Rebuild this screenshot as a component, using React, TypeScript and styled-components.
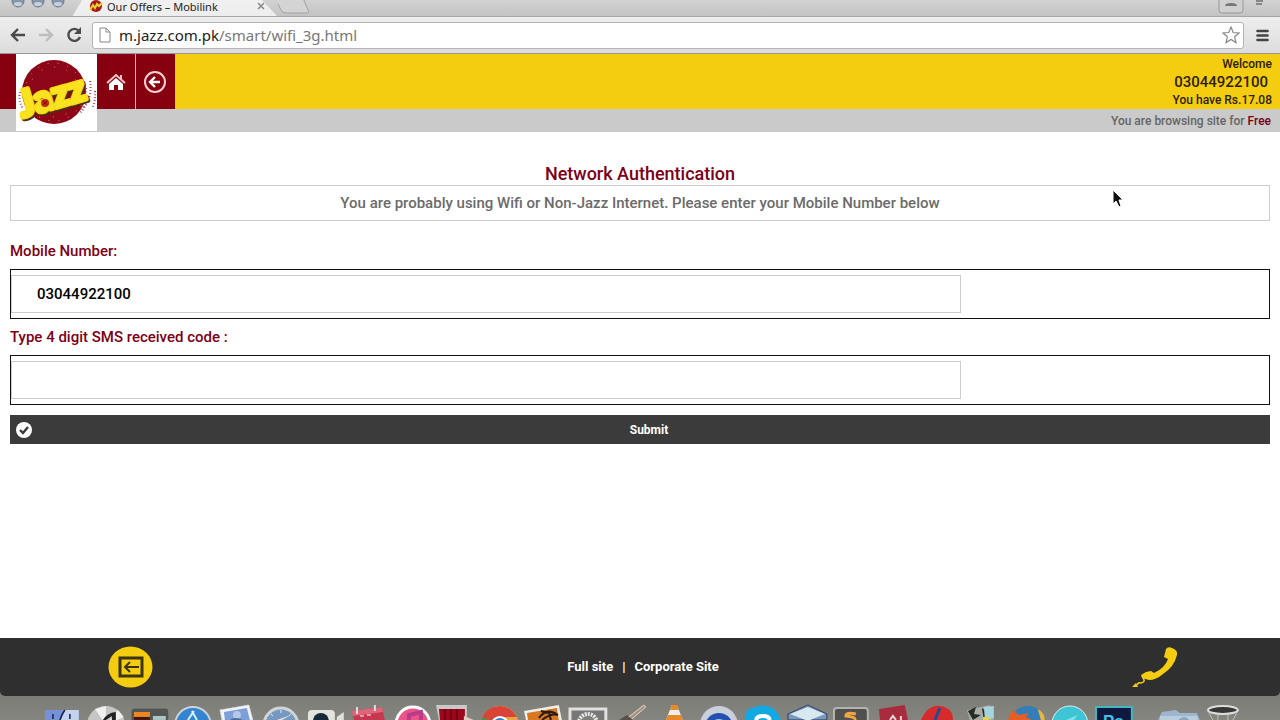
import React, { useState } from 'react';
import styled, { createGlobalStyle } from 'styled-components';

const GlobalStyle = createGlobalStyle`
  * { box-sizing: border-box; }
  body { margin: 0; background: #fff; }
  button, input { font-family: inherit; }
`;

const siteFont = '"Noto Sans", "Open Sans", sans-serif';
const maroon = '#7c0018';
const yellow = '#f5cd10';

const Screen = styled.div`
  display: flex;
  flex-direction: column;
  height: 100vh;
  min-height: 560px;
  overflow: hidden;
  font-family: Roboto, ${siteFont};
  font-weight: 500;
`;

/* Browser window */

const TabStrip = styled.div`
  display: flex;
  height: 17px;
  flex: none;
  overflow: hidden;
  background: linear-gradient(#d2d2d2, #c3c3c3);
  border-bottom: 1px solid #a5a5a5;
`;

const WindowLights = styled.svg`
  flex: none;
  width: 72px;
  height: 17px;
`;

const Tab = styled.div`
  display: flex;
  flex: none;
  width: 206px;
  height: 17px;
  padding: 0 10px 0 17px;
  align-items: flex-start;
  background: linear-gradient(#f0f0f0, #ededed);
  clip-path: polygon(10px 0, 190px 0, 206px 17px, 0 17px);
`;

const Favicon = styled.svg`
  width: 14px;
  height: 13px;
  margin-right: 4px;
`;

const TabTitle = styled.span`
  flex: 1;
  font: 400 11px/14px "Noto Sans", sans-serif;
  color: #222;
  white-space: nowrap;
`;

const TabClose = styled.button`
  width: 10px;
  height: 12px;
  margin-right: 2px;
  padding: 0;
  border: 0;
  background: none;
  line-height: 0;
`;

const NewTab = styled.svg`
  flex: none;
  width: 36px;
  height: 17px;
`;

const StripEnd = styled.svg`
  flex: none;
  width: 64px;
  height: 17px;
  margin-left: auto;
`;

const NavBar = styled.div`
  display: flex;
  align-items: center;
  flex: none;
  height: 37px;
  padding: 0 11px 0 4px;
  background: linear-gradient(#eeeeee, #dcdcdc);
  border-bottom: 1px solid #999;
`;

const NavButton = styled.button`
  display: flex;
  justify-content: center;
  width: 28px;
  padding: 0 5px;
  border: 0;
  background: none;
`;

const AddressBar = styled.div`
  display: flex;
  align-items: center;
  flex: 1;
  height: 27px;
  margin: 0 12px 0 4px;
  padding: 0 3px 0 6px;
  background: #fff;
  border: 1px solid #b4b4b4;
  border-radius: 3px;
`;

const Url = styled.span`
  flex: 1;
  margin-left: 8px;
  font: 400 15px/20px "Noto Sans", sans-serif;
  color: #777;
  b { color: #222; font-weight: 400; }
`;

/* Site header */

const Header = styled.header`
  flex: none;
`;

const TopBar = styled.div`
  display: flex;
  height: 55px;
  background: ${yellow};
`;

const Edge = styled.div`
  width: 16px;
  background: #870010;
`;

const LogoLink = styled.a`
  position: relative;
  width: 81px;
  height: 77px;
  background: #fff;
`;

const TopLink = styled.a`
  display: flex;
  align-items: center;
  justify-content: center;
  width: 39px;
  border-right: 1px solid #eeb2a4;
  background: #870010;
  &:last-of-type { border-right-color: #870010; }
`;

const Account = styled.div`
  display: flex;
  flex-direction: column;
  align-items: flex-end;
  margin-left: auto;
  padding: 1px 8px 0;
  font-size: 12px;
  line-height: 18px;
  color: #2c2100;
`;

const AccountNumber = styled.span`
  padding-right: 4px;
  font-size: 15px;
`;

const BrowseBar = styled.div`
  height: 23px;
  padding-right: 9px;
  background: #cacaca;
  text-align: right;
  font-size: 12px;
  line-height: 24px;
  color: #666;
  span { color: ${maroon}; }
`;

/* Authentication form */

const Main = styled.main`
  position: relative;
  flex: 1;
  padding: 30px 10px 0;
`;

const Title = styled.h1`
  margin: 0;
  text-align: center;
  font-size: 18px;
  line-height: 23px;
  font-weight: 500;
  color: ${maroon};
`;

const Notice = styled.p`
  margin: 0 0 18px;
  border: 1px solid #ccc;
  text-align: center;
  font-size: 15px;
  line-height: 34px;
  color: #6b6b6b;
`;

const Label = styled.label`
  display: block;
  padding: 2px 0 4px;
  font-size: 15px;
  line-height: 20px;
  color: ${maroon};
`;

const FieldFrame = styled.div`
  height: 50px;
  margin: 4px 0 6px;
  padding: 5px 0;
  border: 1px solid #111;
`;

const TextInput = styled.input`
  display: block;
  width: 75.5%;
  height: 38px;
  padding: 0 25px;
  border: 1px solid #ccc;
  font-size: 15px;
  font-weight: 500;
  color: #000;
`;

const Submit = styled.button`
  display: flex;
  align-items: center;
  width: 100%;
  height: 29px;
  margin-top: 10px;
  padding: 0 5px;
  border: 0;
  background: #3b3b3b;
  color: #fff;
  font-size: 12px;
  font-weight: 700;
  span { flex: 1; }
`;

const Cursor = styled.svg`
  position: absolute;
  top: 57px;
  right: 156px;
  width: 12px;
  height: 19px;
`;

/* Footer and dock */

const Footer = styled.footer`
  display: grid;
  grid-template-columns: 1fr auto 1fr;
  align-items: center;
  flex: none;
  height: 58px;
  padding: 0 102px 0 108px;
  background: #2f2f2f;
  border-radius: 0 0 5px 5px;
`;

const FooterLinks = styled.nav`
  display: flex;
  gap: 9px;
  font-size: 13px;
  font-weight: 700;
  line-height: 20px;
  color: #fff;
  a { color: #fff; text-decoration: none; }
`;

const FooterIcon = styled.a<{ $end?: boolean }>`
  justify-self: ${(p) => (p.$end ? 'end' : 'start')};
  line-height: 0;
`;

const Desk = styled.div`
  flex: none;
  background: linear-gradient(#696965, #85857f);
`;

const Dock = styled.div`
  display: flex;
  height: 24px;
  padding: 0 35px 0 40px;
  overflow: hidden;
`;

const DockIcon = styled.svg`
  flex: 1;
  min-width: 0;
  height: 24px;
`;

const DockGap = styled.div`
  width: 22px;
`;

const dockIcons: React.ReactNode[] = [
  <><path d="M5 14H39V24H5Z" fill="#c5d3f1" /><path d="M5 14H25L21 24H5Z" fill="#7591d8" /><path d="M25 14Q22 18 20 24M13 18V23M30 18V23" stroke="#17203b" strokeWidth="1.5" fill="none" /></>,
  <><circle cx="22" cy="29" r="19" fill="#c6c6c6" /><path d="M22 29L11 13L22 10ZM22 29L40 21L34 14Z" fill="#f0f0f0" /><path d="M19 24Q23 17 32 16V24H28V20L22 24Z" fill="#222" /></>,
  <><rect x="3" y="12" width="38" height="20" rx="3" fill="#535653" stroke="#85857f" /><path d="M6 16H22V24H6Z" fill="#e98825" /><path d="M6 21H22V24H6Z" fill="#401510" /><path d="M25 20H38V24H25Z" fill="#a9c8c5" /></>,
  <><circle cx="22" cy="29" r="18" fill="#3484d2" stroke="#cbd2da" strokeWidth="2" /><path d="M23 15L17 24M21 15L26 24" stroke="#d8f3ff" strokeWidth="2" /></>,
  <><path d="M5 14L34 9L38 24H7Z" fill="#f2f4f8" stroke="#d8dde8" strokeDasharray="2 1" /><path d="M9 16L32 12L35 24H10Z" fill="#7b9fd6" /><circle cx="22" cy="19" r="4" fill="#b4c8e4" /><path d="M15 24Q20 20 28 24Z" fill="#4c6c9b" /></>,
  <><circle cx="22" cy="29" r="17" fill="#7599c1" stroke="#d2d4d7" strokeWidth="3" /><path d="M22 14V17M12 18L14 20M32 18L30 20" stroke="#e6edf4" strokeWidth="1" fill="none" /><path d="M32 19L23 24H18Z" fill="#e8e2df" /></>,
  <><rect x="5" y="14" width="27" height="14" rx="4" fill="#e4e4de" /><circle cx="18" cy="25" r="8" fill="#172a3a" /><path d="M34 21L41 16V24H34Z" fill="#dfdfdb" /></>,
  <><path d="M5 15L35 11L38 24H7Z" fill="#c63850" /><path d="M5 15L35 11L36 16L6 20Z" fill="#df6679" /><path d="M10 18V11M28 15V9" stroke="#ddd" strokeWidth="2" /><path d="M13 20H17M20 19H24" stroke="#fff" /></>,
  <><circle cx="22" cy="28" r="17" fill="#eb5487" stroke="#fff" strokeWidth="3" /><path d="M18 24V19L30 16V24" stroke="#b93c8b" strokeWidth="4" fill="none" /></>,
  <><path d="M2 9H33V24H5Z" fill="#c9c9c9" /><path d="M5 13H31V24H6Z" fill="#9c071b" /><path d="M11 13V24M17 13V24M23 13V24" stroke="#780014" strokeWidth="2" /><path d="M30 20L40 24H30Z" fill="#ddd1bd" /></>,
  <><circle cx="22" cy="29" r="19" fill="#e6a545" /><path d="M4 22A19 19 0 0 1 39 21H22L16 26Z" fill="#d94338" /><path d="M4 22L14 24V30H3Z" fill="#399a50" /><circle cx="22" cy="29" r="8" fill="#3c7dd2" stroke="#fff" strokeWidth="2" /></>,
  <><path d="M2 15L37 9L40 24H4Z" fill="#efeeea" /><path d="M5 17L35 12L37 24H6Z" fill="#d87822" /><path d="M17 22Q25 11 36 19Q29 17 20 24M27 16L29 24M26 17L19 15" stroke="#291a13" strokeWidth="2" fill="none" /></>,
  <><rect x="4" y="13" width="36" height="16" fill="#777" stroke="#e0e2df" strokeWidth="3" /><circle cx="22" cy="27" r="9" fill="#7e7e7c" stroke="#e7e7e7" strokeWidth="4" strokeDasharray="2 1" /></>,
  <><path d="M15 24L34 9L36 11L21 24Z" fill="#ac9485" stroke="#dfd1c5" /><path d="M9 24L17 19L23 24Z" fill="#57504b" /></>,
  <><path d="M19 9H24L30 24H13Z" fill="#eee" /><path d="M19 9H24L26 14H17ZM15 19H28L30 24H13Z" fill="#e88925" /></>,
  <><circle cx="22" cy="29" r="19" fill="#c9d0dc" /><circle cx="22" cy="31" r="14" fill="#2451b0" /><circle cx="22" cy="32" r="9" fill="#a0c8f2" /></>,
  <><path d="M4 24Q2 13 14 11Q33 5 40 24Z" fill="#12a9e2" /><path d="M15 24Q16 20 22 20Q28 20 29 24" stroke="#fff" strokeWidth="4" fill="none" /></>,
  <><path d="M3 18L23 9L42 18V24H3Z" fill="#7a99bb" stroke="#323b67" /><path d="M5 18L23 11L40 18L23 25Z" fill="#d5e9ef" /></>,
  <><rect x="5" y="12" width="34" height="20" rx="3" fill="#50504e" stroke="#b3b3b0" strokeWidth="2" /><path d="M27 18Q17 16 17 20Q27 21 26 24" stroke="#f2a541" strokeWidth="3" fill="none" /></>,
  <><path d="M7 13L33 9L36 24H8Z" fill="#a92b3e" /><path d="M18 24L21 20L24 24M29 20V24" stroke="#ead8d6" strokeWidth="2" fill="none" /></>,
  <><path d="M5 24Q12 8 25 10Q38 13 37 24Z" fill="#d52b2d" /><path d="M24 12L19 24" stroke="#244a91" strokeWidth="3" /></>,
  <><path d="M7 14L30 9L34 24H10Z" fill="#a9aca4" /><path d="M8 15L16 11L14 18L21 19L13 24ZM22 12L27 16L24 24Z" fill="#242c24" /><path d="M24 11L34 10V22L25 24Z" fill="#a5d3de" /><path d="M23 21H29V24H23Z" fill="#e5d44b" /></>,
  <><circle cx="24" cy="28" r="18" fill="#357db7" /><path d="M4 24L8 14L15 19L25 17L22 21L28 24Z" fill="#e75d24" /><path d="M34 13Q41 17 41 24H37Z" fill="#eab63d" /></>,
  <><circle cx="22" cy="28" r="18" fill="#3fc4d5" stroke="#dbefee" strokeWidth="1" /><path d="M18 24L30 19L26 24Z" fill="#80e2ea" /></>,
  <><rect x="4" y="11" width="36" height="20" fill="#101840" stroke="#3eb9c4" strokeWidth="2" /><text x="11" y="31" fontFamily="Liberation Sans" fontWeight="700" fontSize="17" fill="#42c1e2">Ps</text></>,
  <><path d="M1 24L5 16L19 14L23 17H40L43 24Z" fill="#9bb6ce" /><path d="M3 20H41V24H3Z" fill="#b9cddd" /><circle cx="27" cy="27" r="6" fill="#8aa7bf" /></>,
  <><ellipse cx="22" cy="14" rx="15" ry="4" fill="#373736" stroke="#ddd" strokeWidth="2" /><path d="M8 17L12 24M36 17L32 24M17 19V24M27 19V24" stroke="#c1c1bd" strokeWidth="1" /></>,
];

function JazzLogo() {
  return (
    <svg width="81" height="77" viewBox="0 0 81 77" role="img" aria-label="Jazz">
      <circle cx="38" cy="38" r="32" fill="#8d0718" />
      <g fill="none" stroke="#d98b72" strokeWidth="1">
        <circle cx="38" cy="38" r="29" strokeDasharray="1 9" />
        <circle cx="38" cy="38" r="25" strokeDasharray="1 12" />
      </g>
      <g fill="none" stroke="#b8455c" strokeWidth="2" strokeDasharray="1 2">
        <path d="M74 27Q77 45 64 59M70 34Q70 48 64 57M79 37Q80 47 76 54M4 38Q2 46 7 55M67 44L72 48M65 51L70 54" />
      </g>
      <g transform="rotate(-16 39 44)" fontFamily="Lato, sans-serif" fontWeight="900" fontSize="37" strokeLinejoin="round">
        <text x="3" y="56" fill="#4c3010" stroke="#4c3010" strokeWidth="4">Jazz</text>
        <text x="2" y="54" fill="#fff06a" stroke="#fbdc16" strokeWidth="4" paintOrder="stroke">Jazz</text>
        <text x="2" y="54" fill="#f9e31c">Jazz</text>
      </g>
      <circle cx="29" cy="49" r="4" fill="#c42712" />
      <path d="M27 47L31 51M31 47L27 51" stroke="#7e1010" strokeWidth="1" />
    </svg>
  );
}

export default function App() {
  const [mobile, setMobile] = useState('03044922100');
  const [code, setCode] = useState('');
  return (
    <Screen>
      <GlobalStyle />
      <TabStrip>
        <WindowLights viewBox="0 0 72 17">
          {[18, 38, 58].map((x) => (
            <g key={x}>
              <circle cx={x} cy="1" r="6" fill="#8797aa" stroke="#737b85" />
              <ellipse cx={x} cy="4" rx="4" ry="2" fill="#c3d2e2" />
            </g>
          ))}
        </WindowLights>
        <Tab>
          <Favicon viewBox="0 0 14 13">
            <circle cx="7" cy="6" r="6" fill="#a31b1c" />
            <path d="M1 10L4 5L6 8L8 4L10 6L13 3" stroke="#efd326" strokeWidth="2" fill="none" />
          </Favicon>
          <TabTitle>Our Offers – Mobilink</TabTitle>
          <TabClose aria-label="Close tab">
            <svg width="10" height="12" viewBox="0 0 10 12"><path d="M2 3L8 9M8 3L2 9" stroke="#888" strokeWidth="1.5" /></svg>
          </TabClose>
        </Tab>
        <NewTab viewBox="0 0 36 17"><path d="M-3 -2L3 10Q4 13 8 13H28Q32 13 30 10L25 -2Z" fill="#d4d4d4" stroke="#a0a0a0" /></NewTab>
        <StripEnd viewBox="0 0 64 17">
          <path d="M3 -2V10Q3 13 6 13H24Q27 13 27 10V-2" fill="#d0d0d0" stroke="#999" />
          <path d="M9 6Q9 3 15 3Q21 3 21 6Z" fill="#777" />
          <path d="M40 1H47M40 4H46" stroke="#888" strokeWidth="2" />
        </StripEnd>
      </TabStrip>
      <NavBar>
        <NavButton aria-label="Back">
          <svg width="18" height="16" viewBox="0 0 18 16" fill="none" stroke="#4a4a4a" strokeWidth="2.4"><path d="M16 8H3M9 2L3 8L9 14" /></svg>
        </NavButton>
        <NavButton aria-label="Forward">
          <svg width="18" height="16" viewBox="0 0 18 16" fill="none" stroke="#bdbdbd" strokeWidth="2.4"><path d="M2 8H15M9 2L15 8L9 14" /></svg>
        </NavButton>
        <NavButton aria-label="Reload">
          <svg width="18" height="18" viewBox="0 0 18 18"><path d="M14 5A6 6 0 1 0 15 11" fill="none" stroke="#4a4a4a" strokeWidth="2.4" /><path d="M16 1V8H9Z" fill="#4a4a4a" /></svg>
        </NavButton>
        <AddressBar>
          <svg width="12" height="16" viewBox="0 0 12 16" fill="#fff" stroke="#888"><path d="M1 1H7L11 5V15H1ZM7 1V5H11" /></svg>
          <Url><b>m.jazz.com.pk</b>/smart/wifi_3g.html</Url>
          <svg width="18" height="18" viewBox="0 0 18 18" fill="#fff" stroke="#888" strokeWidth="1.2"><path d="M9 1L11.2 6.5L17 7L12.6 10.8L14 16.6L9 13.5L4 16.6L5.4 10.8L1 7L6.8 6.5Z" /></svg>
        </AddressBar>
        <svg width="13" height="13" viewBox="0 0 13 13" stroke="#444" strokeWidth="2.6" strokeLinecap="round"><path d="M1.5 2H11.5M1.5 6.5H11.5M1.5 11H11.5" /></svg>
      </NavBar>

      <Header>
        <TopBar>
          <Edge />
          <LogoLink href="#"><JazzLogo /></LogoLink>
          <TopLink href="#" aria-label="Home">
            <svg width="20" height="18" viewBox="0 0 20 18"><path d="M1 10L10 2L19 10" stroke="#f4c4c8" strokeWidth="2" fill="none" /><path d="M3 11L10 5L17 11V17H12V12H8V17H3Z" fill="#fff" /><path d="M14 2H16V7L14 5Z" fill="#f4c4c8" /></svg>
          </TopLink>
          <TopLink href="#" aria-label="Go back">
            <svg width="24" height="24" viewBox="0 0 24 24" fill="none"><circle cx="12" cy="12" r="10" stroke="#f7cfd3" strokeWidth="2" /><path d="M17 12H8M12 7L7 12L12 17" stroke="#fff" strokeWidth="2.4" /></svg>
          </TopLink>
          <Account>
            <span>Welcome</span>
            <AccountNumber>03044922100</AccountNumber>
            <span>You have Rs.17.08</span>
          </Account>
        </TopBar>
        <BrowseBar>You are browsing site for <span>Free</span></BrowseBar>
      </Header>

      <Main>
        <Title>Network Authentication</Title>
        <Notice>You are probably using Wifi or Non-Jazz Internet. Please enter your Mobile Number below</Notice>
        <form onSubmit={(e) => e.preventDefault()}>
          <Label htmlFor="mobile">Mobile Number:</Label>
          <FieldFrame><TextInput id="mobile" value={mobile} onChange={(e) => setMobile(e.target.value)} /></FieldFrame>
          <Label htmlFor="code">Type 4 digit SMS received code :</Label>
          <FieldFrame><TextInput id="code" value={code} onChange={(e) => setCode(e.target.value)} /></FieldFrame>
          <Submit type="submit">
            <svg width="18" height="18" viewBox="0 0 18 18"><circle cx="9" cy="9" r="8" fill="#fff" /><path d="M5 9L8 12L13 6" stroke="#3b3b3b" strokeWidth="2.4" fill="none" /></svg>
            <span>Submit</span>
          </Submit>
        </form>
        <Cursor viewBox="0 0 12 19"><path d="M1 1V15L4 12L7 18L9 17L7 11H11Z" fill="#111" stroke="#fff" /></Cursor>
      </Main>

      <Desk>
        <Footer>
          <FooterIcon href="#" aria-label="Back">
            <svg width="45" height="42" viewBox="0 0 45 42" fill="none" stroke="#3c350c"><ellipse cx="22.5" cy="21" rx="22" ry="20.5" fill={yellow} stroke="none" /><rect x="12" y="12" width="22" height="18" strokeWidth="3" /><path d="M31 21H17M22 16L17 21L22 26" strokeWidth="2" /></svg>
          </FooterIcon>
          <FooterLinks>
            <a href="#">Full site</a><span>|</span><a href="#">Corporate Site</a>
          </FooterLinks>
          <FooterIcon href="#" aria-label="Call us" $end>
            <svg width="47" height="42" viewBox="0 0 47 42"><path d="M35 3Q37 0 41 2Q47 4 46 9Q43 21 32 28Q25 34 18 34L11 32L10 29L15 26L20 25L23 27Q34 22 37 13L33 11Z" fill={yellow} /><path d="M12 32Q15 36 10 37Q7 36 6 39" stroke={yellow} strokeWidth="1.5" fill="none" /><path d="M1 41L5 37L7 41Z" fill={yellow} /></svg>
          </FooterIcon>
        </Footer>
        <Dock aria-hidden="true">
          {dockIcons.map((art, i) => (
            <React.Fragment key={i}>
              {i === 25 && <DockGap />}
              <DockIcon viewBox="0 0 44 24">{art}</DockIcon>
            </React.Fragment>
          ))}
        </Dock>
      </Desk>
    </Screen>
  );
}
